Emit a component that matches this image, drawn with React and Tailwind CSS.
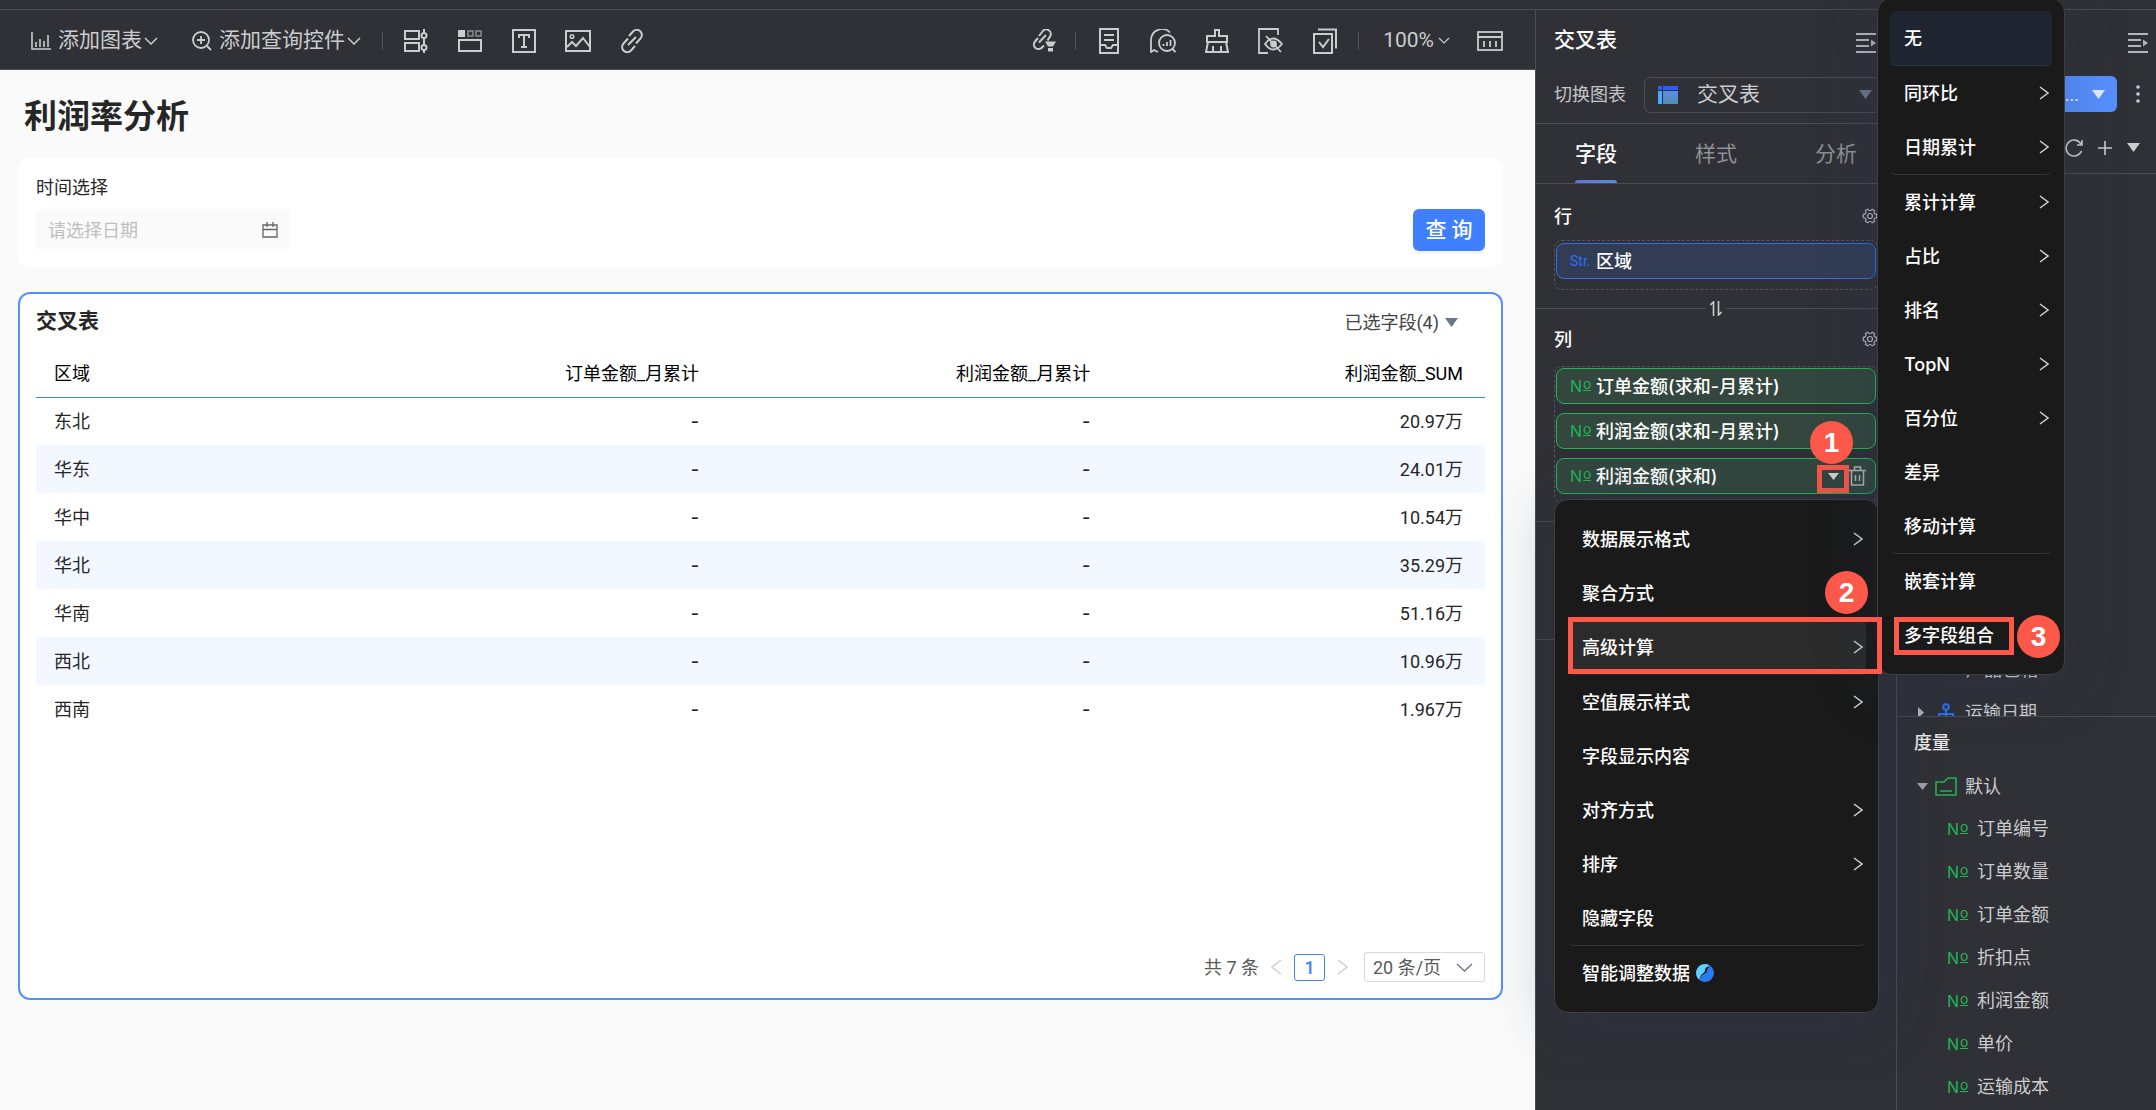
import React from "react";

const REGIONS = [
  ["东北", "20.97万"],
  ["华东", "24.01万"],
  ["华中", "10.54万"],
  ["华北", "35.29万"],
  ["华南", "51.16万"],
  ["西北", "10.96万"],
  ["西南", "1.967万"],
];

const MEASURES = ["订单编号", "订单数量", "订单金额", "折扣点", "利润金额", "单价", "运输成本"];

const FIELD_MENU = [
  { label: "数据展示格式", sub: true },
  { label: "聚合方式", mark: "2" },
  { label: "高级计算", sub: true, active: true },
  { label: "空值展示样式", sub: true },
  { label: "字段显示内容" },
  { label: "对齐方式", sub: true },
  { label: "排序", sub: true },
  { label: "隐藏字段", line: true },
  { label: "智能调整数据", ai: true },
];

const CALC_MENU = [
  { label: "无", selected: true },
  { label: "同环比", sub: true },
  { label: "日期累计", sub: true, line: true },
  { label: "累计计算", sub: true },
  { label: "占比", sub: true },
  { label: "排名", sub: true },
  { label: "TopN", sub: true },
  { label: "百分位", sub: true },
  { label: "差异" },
  { label: "移动计算", line: true },
  { label: "嵌套计算" },
  { label: "多字段组合", mark: "3" },
];

function Svg({ w = 26, h = 26, sw = 2, className = "", children }) {
  return (
    <svg
      width={w}
      height={h}
      viewBox={`0 0 ${w} ${h}`}
      fill="none"
      stroke="currentColor"
      strokeWidth={sw}
      className={`shrink-0 ${className}`}
      aria-hidden="true"
    >
      {children}
    </svg>
  );
}

const ChevronDown = ({ w = 14, h = 8, sw = 1.5, className }) => (
  <Svg w={w} h={h} sw={sw} className={className}>
    <path d={`M1 1 L${w / 2} ${h - 1} L${w - 1} 1`} />
  </Svg>
);
const ChevronRight = ({ className }) => (
  <Svg w={10} h={14} sw={1.5} className={className}>
    <path d="M1 1 L9 7 L1 13" />
  </Svg>
);
const Triangle = ({ className }) => (
  <Svg w={13} h={9} sw={0} className={className}>
    <path d="M0 0h13l-6.500 9z" fill="currentColor" />
  </Svg>
);
const Gear = () => (
  <Svg w={16} h={16} sw={1.2} className="text-[#b4b5b8]">
    <path d="M5.800 1.200 a2.500 2.500 0 0 0 4.400 0 l2.300 1.300 a2.500 2.500 0 0 0 2.200 3.900 v3.200 a2.500 2.500 0 0 0 -2.200 3.900 l-2.300 1.300 a2.500 2.500 0 0 0 -4.400 0 l-2.300 -1.300 a2.500 2.500 0 0 0 -2.200 -3.900 v-3.200 a2.500 2.500 0 0 0 2.200 -3.900z" />
    <circle cx="8" cy="8" r="2.500" />
  </Svg>
);
const Collapse = () => (
  <Svg w={20} h={20} sw={2} className="text-[#b4b5b8]">
    <path d="M0 1h20M0 7h13M0 13h13M0 19h20" />
    <path d="M15 6.500l5 3.500l-5 3.500z" fill="currentColor" stroke="none" />
  </Svg>
);
const Hierarchy = () => (
  <Svg w={20} h={20} sw={2} className="text-[#2e6ff2]">
    <circle cx="10" cy="4" r="2.800" />
    <path d="M10 7v7M3 15v-4h14v4" />
    <circle cx="3" cy="16.500" r="2" />
    <circle cx="10" cy="16.500" r="2" />
    <circle cx="17" cy="16.500" r="2" />
  </Svg>
);

// Numeric-field marker: a capital N with a raised, underlined o.
function NumberTag({ className }) {
  return (
    <span
      className={`flex items-center font-['Inter',sans-serif] text-[16px] leading-none font-normal text-[#22b455] ${className}`}
    >
      N<span className="mb-1 ml-px border-b border-current text-[14px] leading-[13px]">o</span>
    </span>
  );
}

function ToolButton({ label, children }) {
  return (
    <button type="button" aria-label={label} className="flex w-[26px] items-center justify-center">
      {children}
    </button>
  );
}

function Divider() {
  return <span className="h-[18px] w-px bg-[#55565b]" />;
}

function Toolbar() {
  return (
    <div className="flex h-[60px] items-center border-b border-[#4b4c51] bg-[#303136] pt-0.5 pr-8 pl-[31px] text-[21px] text-[#cbccce]">
      <button type="button" className="flex items-center">
        <Svg w={20} h={18} sw={1.6} className="mr-[7px]">
          <path d="M1 0v17h19M5 15v-5M9 15v-8M13 15v-6M17 15v-12" />
        </Svg>
        添加图表
        <ChevronDown className="ml-[2px]" />
      </button>
      <button type="button" className="ml-[34px] flex items-center">
        <Svg w={20} h={20} sw={1.8} className="mr-[7px]">
          <circle cx="9" cy="9" r="8" />
          <path d="M9 5v8M5 9h8M15 15l4 4" />
        </Svg>
        添加查询控件
        <ChevronDown className="ml-[2px]" />
      </button>
      <div className="ml-[21px] flex items-center gap-5">
        <Divider />
        <div className="flex items-center gap-7">
          <ToolButton label="筛选">
            <Svg w={24} h={24} sw={2}>
              <rect x="1" y="2" width="14" height="8" />
              <rect x="1" y="14" width="14" height="8" />
              <path d="M20 0v4M20 9v7M20 21v3" />
              <circle cx="20" cy="6.500" r="2.500" />
              <circle cx="20" cy="18.500" r="2.500" />
            </Svg>
          </ToolButton>
          <ToolButton label="标签页">
            <Svg w={24} h={22} sw={2}>
              <rect x="0" y="0" width="7" height="7" fill="currentColor" stroke="none" />
              <g strokeWidth="1.500" opacity="0.6">
                <rect x="10" y="1" width="5" height="5" />
                <rect x="18" y="1" width="5" height="5" />
              </g>
              <rect x="1" y="10" width="22" height="11" />
            </Svg>
          </ToolButton>
          <ToolButton label="文本">
            <Svg w={24} h={24} sw={2}>
              <rect x="1" y="1" width="22" height="22" />
              <path d="M7 9V6h10v3M12 6v12M9 18h6" />
            </Svg>
          </ToolButton>
          <ToolButton label="图片">
            <Svg w={26} h={22} sw={2}>
              <rect x="1" y="1" width="24" height="20" />
              <circle cx="7" cy="6.500" r="1.800" strokeWidth="1.500" />
              <path d="M2 17l5-5l4 4l7-8l7 9" />
            </Svg>
          </ToolButton>
          <ToolButton label="链接">
            <Svg w={24} h={24} sw={2}>
              <path d="M9 7l4-4.500a5 5 0 0 1 7.500 7l-4.500 5M15 17l-4 4.500a5 5 0 0 1-7.500-7l4.500-5M8 16l8-8" />
            </Svg>
          </ToolButton>
        </div>
      </div>
      <div className="ml-auto flex items-center">
        <ToolButton label="数据联动">
          <Svg w={24} h={24} sw={2}>
            <path d="M7 7l3.500-4.500a4.500 4.500 0 0 1 7.500 5l-2.500 4M12 16.500l-2 2a4.500 4.500 0 0 1-7-6l3-3.500M7 13.500l7-7.500" />
            <path d="M13 12.500h11l-3 5h-5zM16 19h5v3.500h-5z" fill="currentColor" stroke="none" />
          </Svg>
        </ToolButton>
        <span className="ml-[18px] flex">
          <Divider />
        </span>
        <div className="ml-5 flex items-center gap-7">
          <ToolButton label="存档">
            <Svg w={20} h={26} sw={2}>
              <rect x="1" y="1" width="18" height="24" />
              <path d="M5 7h10M5 12h10M1 17h5l2 3h4l2-3h5" />
            </Svg>
          </ToolButton>
          <ToolButton label="分析">
            <Svg w={26} h={24} sw={1.8}>
              <path d="M20 3.500A11 11 0 0 0 1 11v12l3-2l4 2" />
              <circle cx="17" cy="14" r="8" />
              <path d="M22.500 20l3 3M13.500 17v-2M17 17v-4M20.500 17v-6" />
            </Svg>
          </ToolButton>
          <ToolButton label="清理">
            <Svg w={24} h={24} sw={2}>
              <path d="M10 7V1h4v6h8v6H2V7zM3 13l-2 10h22l-2-10M8 23v-6M16 23v-6" />
            </Svg>
          </ToolButton>
          <ToolButton label="隐藏">
            <Svg w={26} h={26} sw={1.8}>
              <path d="M20 7V1H1v24h9" />
              <path d="M7 16q8-11 17 0q-9 11-17 0zM8 8l15 16" />
              <circle cx="15.500" cy="16" r="2.500" fill="currentColor" />
            </Svg>
          </ToolButton>
          <ToolButton label="选择">
            <Svg w={26} h={26} sw={2}>
              <rect x="2" y="6" width="18" height="19" />
              <path d="M6 1.500h18v19M7 14l4 5l6-8" />
            </Svg>
          </ToolButton>
        </div>
        <span className="ml-5 flex">
          <Divider />
        </span>
        <button type="button" className="ml-6 flex items-center">
          100%
          <ChevronDown w={12} h={7} sw={1.2} className="ml-1" />
        </button>
        <span className="ml-[27px] flex">
          <ToolButton label="布局">
            <Svg w={26} h={20} sw={1.8}>
              <rect x="1" y="1" width="24" height="18" />
              <path d="M1 6h24M7 10v6M13 10v6M19 10v6" />
            </Svg>
          </ToolButton>
        </span>
      </div>
    </div>
  );
}

function Canvas() {
  return (
    <main className="flex flex-1 flex-col bg-[#fafafa] pt-[25px] pr-8 pl-[18px] pb-[110px] text-[18px] text-[#262626]">
      <h1 className="pl-1.5 text-[33px] leading-[44px] font-bold">利润率分析</h1>

      <form className="mt-[19px] flex items-end justify-between rounded-xl bg-white pt-[17px] pr-[18px] pb-[17px] pl-[18px]">
        <div className="flex flex-col">
          <label htmlFor="date" className="mb-2 leading-[26px]">
            时间选择
          </label>
          <div className="flex h-[42px] w-[254px] items-center rounded-md bg-[#fafafa] px-3">
            <input
              id="date"
              type="text"
              placeholder="请选择日期"
              className="min-w-0 flex-1 bg-transparent outline-none placeholder:text-[#bfbfbf]"
            />
            <Svg w={16} h={16} sw={1.3} className="text-[#666]">
              <path d="M1 3h14v12H1zM1 7.500h14M5 0v5M11 0v5" />
            </Svg>
          </div>
        </div>
        <button
          type="button"
          className="h-[42px] w-[72px] rounded-md bg-[#407fff] pt-0.5 text-[21px] font-medium text-white shadow-[0_3px_0_rgba(0,0,0,0.04)]"
        >
          查 询
        </button>
      </form>

      <section className="mt-6 flex flex-1 flex-col rounded-xl border-2 border-[#5490fa] bg-white px-4">
        <div className="flex h-[56px] items-center justify-between pr-[27px]">
          <h2 className="text-[21px] font-bold">交叉表</h2>
          <button type="button" className="flex items-center text-[#444]">
            已选字段(4)
            <Triangle className="ml-1.5 text-[#6b7488]" />
          </button>
        </div>
        <table className="w-full table-fixed border-collapse text-right">
          <colgroup>
            <col className="w-[20%]" />
            <col className="w-[27%]" />
            <col className="w-[27%]" />
            <col className="w-[26%]" />
          </colgroup>
          <thead className="text-black">
            <tr className="h-[47px] border-b border-[#407fff]">
              <th scope="col" className="pl-[18px] text-left font-normal">
                区域
              </th>
              <th scope="col" className="pr-[18px] font-normal">
                订单金额_月累计
              </th>
              <th scope="col" className="pr-[18px] font-normal">
                利润金额_月累计
              </th>
              <th scope="col" className="pr-[22px] font-normal">
                利润金额_SUM
              </th>
            </tr>
          </thead>
          <tbody>
            {REGIONS.map(([name, value]) => (
              <tr key={name} className="h-[48px] even:bg-[#f3f7ff]">
                <td className="pl-[18px] text-left">{name}</td>
                <td className="pr-[18px] font-['Inter',sans-serif] font-medium">-</td>
                <td className="pr-[18px] font-['Inter',sans-serif] font-medium">-</td>
                <td className="pr-[22px]">{value}</td>
              </tr>
            ))}
          </tbody>
        </table>
        <nav className="mt-auto mb-4 flex items-center justify-end text-[#595959]">
          共 7 条
          <button type="button" aria-label="上一页" className="ml-3 text-[#d0d0d0]">
            <Svg w={11} h={16} sw={1.5}>
              <path d="M10 1L1 8l9 7" />
            </Svg>
          </button>
          <button
            type="button"
            className="mr-3 ml-3 h-[27px] w-[31px] rounded-[3px] border border-[#407fff] leading-[25px] font-medium text-[#407fff]"
          >
            1
          </button>
          <button type="button" aria-label="下一页" className="text-[#d0d0d0]">
            <Svg w={11} h={16} sw={1.5}>
              <path d="M1 1l9 7l-9 7" />
            </Svg>
          </button>
          <div className="relative ml-4 flex w-[121px] items-center">
            <select
              aria-label="每页条数"
              className="h-[30px] w-full appearance-none rounded-[3px] border border-[#d9d9d9] bg-white pl-2"
            >
              <option>20 条/页</option>
            </select>
            <ChevronDown w={17} h={9} sw={1.3} className="pointer-events-none absolute right-3 text-[#6b7488]" />
          </div>
        </nav>
      </section>
    </main>
  );
}

function Mark({ n, className }) {
  return (
    <span
      className={`absolute z-30 flex size-[43px] items-center justify-center rounded-full bg-[#fd584a] font-['Liberation_Sans',sans-serif] text-[28px] leading-none font-bold text-white ${className}`}
    >
      {n}
    </span>
  );
}

function MenuItem({ item }) {
  const tone = item.active ? "bg-[#2b2b2b]" : item.selected ? "bg-[#1f2530]" : "";
  const edge = item.line
    ? "border-b border-[#333438]"
    : item.selected
      ? "border-b border-[#2c3340]"
      : item.active
        ? "border-b border-[#2b2b2b]"
        : "";
  return (
    <li className="relative">
      <button
        type="button"
        className={`box-content flex h-[54px] w-full items-center rounded-md font-medium text-white ${tone} ${edge}`}
      >
        <span className="ml-3.5">{item.label}</span>
        {item.ai && (
          <Svg w={18} h={18} sw={0} className="ml-1.5">
            <circle cx="9" cy="9" r="9" fill="#2b7bf0" />
            <path d="M9 0a9 9 0 0 0-6 15.500c1-5 6-4 7-8c1-3 2-4 4-5.500a9 9 0 0 0-5-2z" fill="#5fd0ff" />
            <path d="M4 15.500c0-5 6-5 7-8.500c0-2 1-3 3-4.500c-4 0-5 2-5 4.500c-1 3-5.500 3-5 8.500z" fill="#10182c" />
          </Svg>
        )}
        {item.sub && <ChevronRight className="mr-[3px] ml-auto text-[#d0d0d0]" />}
      </button>
      {item.mark === "2" && <Mark n="2" className="top-[5px] -right-[2px]" />}
      {item.active && (
        <span className="pointer-events-none absolute -top-[3px] -right-4 bottom-px left-0 z-30 border-[5px] border-[#fd584a]" />
      )}
      {item.mark === "3" && (
        <>
          <span className="pointer-events-none absolute top-[9px] bottom-[7px] left-1 z-30 w-[120px] border-[5px] border-[#fd584a]" />
          <Mark n="3" className="top-[7px] left-[127px]" />
        </>
      )}
    </li>
  );
}

function CalcMenu() {
  return (
    <ul className="absolute -top-[502px] left-[322px] z-20 w-[188px] rounded-[14px] border border-[#3e3f43] bg-[#1a1a1a] p-3 font-['Inter','Noto_Sans_CJK_SC',sans-serif] shadow-[0_8px_56px_8px_rgba(32,48,80,0.22)]">
      {CALC_MENU.map((item) => (
        <MenuItem key={item.label} item={item} />
      ))}
    </ul>
  );
}

function FieldMenu() {
  return (
    <div className="absolute top-[132px] -left-px z-10 w-[325px] rounded-[14px] border border-[#3e3f43] bg-[#1a1a1a] shadow-[0_8px_56px_8px_rgba(32,48,80,0.22)]">
      <ul className="py-3 pr-3 pl-[13px]">
        {FIELD_MENU.map((item) => (
          <MenuItem key={item.label} item={item} />
        ))}
      </ul>
      <CalcMenu />
    </div>
  );
}

function MeasureChip({ label, open }) {
  return (
    <div className="flex h-[36px] items-center rounded-lg border border-[#22b455] bg-[#33473e] font-['Inter','Noto_Sans_CJK_SC',sans-serif] font-medium text-white">
      <NumberTag className="w-[39px] pl-[13px]" />
      {label}
      {open && (
        <div className="mr-[9px] ml-auto flex items-center gap-1.5">
          <button
            type="button"
            aria-label="字段设置"
            className="relative flex h-7 w-5 items-center justify-center text-[#d5d6d8]"
          >
            <Svg w={11} h={7} sw={0}>
              <path d="M0 0h11l-5.500 7z" fill="currentColor" />
            </Svg>
            <span className="absolute top-[3px] -right-1.5 -bottom-[3px] -left-1.5 border-[5px] border-[#fd584a]" />
            <Mark n="1" className="-top-[41px] -left-[13px]" />
          </button>
          <button type="button" aria-label="删除" className="text-[#b4b5b8]">
            <Svg w={17} h={20} sw={1.5}>
              <path d="M0 4.500h17M5.500 4V1h6v3M2.500 5v14h12V5M6.500 9v6M10.500 9v6" />
            </Svg>
          </button>
        </div>
      )}
    </div>
  );
}

function ChartPanel() {
  return (
    <aside className="relative z-10 flex w-[361px] shrink-0 flex-col border-l border-[#4b4c51] bg-[#303136] text-[18px] text-white">
      <div className="flex h-[60px] items-center justify-between pt-px pr-5 pl-[18px]">
        <h2 className="text-[21px] font-medium">交叉表</h2>
        <button type="button" aria-label="收起" className="pt-1">
          <Collapse />
        </button>
      </div>
      <div className="flex h-[54px] items-center border-b border-[#4b4c51] pr-4 pb-1 pl-[18px]">
        <label htmlFor="chart" className="mr-[18px] text-[#c4c5c8]">
          切换图表
        </label>
        <div className="relative flex flex-1 items-center">
          <Svg w={20} h={18} sw={0} className="pointer-events-none absolute left-3.5">
            <defs>
              <linearGradient id="cross" x1="0" y1="0" x2="0" y2="1">
                <stop offset="0" stopColor="#5a8ef0" />
                <stop offset="1" stopColor="#4f8fa8" />
              </linearGradient>
            </defs>
            <path d="M0 0h4v4h-4zM5 0h15v4h-15z" fill="#2f5bff" />
            <path d="M0 5h4v13h-4z" fill="#4aa8ff" />
            <path d="M5 5h15v13h-15z" fill="url(#cross)" />
          </Svg>
          <select
            id="chart"
            className="h-[36px] w-full appearance-none rounded-md border border-[#4b4c51] bg-[#303136] pl-[52px] text-[21px] leading-none text-[#cbccce]"
          >
            <option>交叉表</option>
          </select>
          <Triangle className="pointer-events-none absolute right-2 text-[#6b7488]" />
        </div>
      </div>
      <div role="tablist" className="grid h-[60px] grid-cols-3 border-b border-[#4b4c51] text-[21px] text-[#8f9094]">
        <button
          type="button"
          role="tab"
          aria-selected="true"
          className="flex flex-col items-center justify-between font-medium text-white"
        >
          <span className="mt-[15px]">字段</span>
          <span className="h-[3px] w-[42px] rounded-t bg-gradient-to-r from-[#6b6bd9] to-[#4b93d9]" />
        </button>
        <button type="button" role="tab" className="pt-0.5">
          样式
        </button>
        <button type="button" role="tab" className="pt-0.5">
          分析
        </button>
      </div>

      <section className="px-[18px] pb-[18px]">
        <div className="flex h-[56px] items-center justify-between pt-2">
          <h3 className="font-medium">行</h3>
          <button type="button" aria-label="行设置">
            <Gear />
          </button>
        </div>
        <div className="h-[50px] rounded-lg border border-dashed border-[#55565b] p-px pt-0.5">
          <div className="flex h-[36px] items-center rounded-lg border border-[#2e6ff2] bg-[#323d55] font-medium">
            <span className="w-[39px] pl-[13px] text-[14px] font-normal text-[#2e6ff2]">Str.</span>
            区域
          </div>
        </div>
      </section>

      <section className="px-[18px] pb-[18px]">
        <div className="-mx-[18px] -mt-2 flex h-4 items-center gap-1">
          <span className="h-px flex-1 bg-[#4b4c51]" />
          <Svg w={12} h={15} sw={1.6} className="text-[#cbccce]">
            <path d="M3.500 15V1l-3 3M8.500 0v14l3-3" />
          </Svg>
          <span className="h-px flex-1 bg-[#4b4c51]" />
        </div>
        <div className="flex h-[50px] items-center justify-between pb-1">
          <h3 className="font-medium">列</h3>
          <button type="button" aria-label="列设置">
            <Gear />
          </button>
        </div>
        <div className="relative flex flex-col gap-[9px] rounded-lg border border-dashed border-[#55565b] p-px pb-2">
          <MeasureChip label="订单金额(求和-月累计)" />
          <MeasureChip label="利润金额(求和-月累计)" />
          <MeasureChip label="利润金额(求和)" open />
          <FieldMenu />
        </div>
      </section>
      <div className="h-[119px] border-y border-[#4b4c51]" />
    </aside>
  );
}

function DataPanel() {
  return (
    <aside className="flex w-[260px] shrink-0 flex-col border-l border-[#4b4c51] bg-[#303136] text-[18px] text-[#cbccce]">
      <div className="flex h-[60px] items-center justify-end pt-[5px] pr-2">
        <button type="button" aria-label="收起">
          <Collapse />
        </button>
      </div>
      <div className="flex h-[52px] items-center justify-end pb-1">
        <button
          type="button"
          aria-label="数据集"
          className="flex h-[36px] w-[190px] items-center justify-end rounded-md bg-[#5790ff] pr-3 text-white"
        >
          ...
          <Triangle className="ml-[13px] text-[#e6eeff]" />
        </button>
        <button type="button" aria-label="更多" className="mr-[15px] ml-[18px]">
          <Svg w={6} h={20} sw={0}>
            <g fill="#cbccce">
              <circle cx="3" cy="3" r="1.800" />
              <circle cx="3" cy="10" r="1.800" />
              <circle cx="3" cy="17" r="1.800" />
            </g>
          </Svg>
        </button>
      </div>
      <div className="flex h-[52px] items-center justify-end gap-[15px] border-b border-[#4b4c51] pr-4">
        <button type="button" aria-label="刷新">
          <Svg w={18} h={18} sw={1.6}>
            <path d="M16.500 12A8 8 0 1 1 16 5M17 1v5h-5" />
          </Svg>
        </button>
        <button type="button" aria-label="新增">
          <Svg w={14} h={14} sw={1.6}>
            <path d="M7 0v14M0 7h14" />
          </Svg>
        </button>
        <button type="button" aria-label="展开">
          <Triangle />
        </button>
      </div>
      <ul className="h-[543px] overflow-hidden border-b border-[#4b4c51] pt-[474px] pl-[21px]">
        <li className="flex h-[43px] items-center">
          <span className="ml-[20px] w-[28px] text-[14px] text-[#2e6ff2]">Str.</span>
          产品包箱
        </li>
        <li className="flex h-[43px] items-center">
          <Svg w={6} h={11} sw={0} className="mr-3">
            <path d="M0 0v11l6-5.500z" fill="#b4b5b8" />
          </Svg>
          <Hierarchy />
          <span className="ml-[9px]">运输日期</span>
        </li>
      </ul>
      <h3 className="flex h-[51px] items-center pl-[17px] font-medium text-[#e8e8e8]">度量</h3>
      <div className="flex h-[36px] items-center pl-5">
        <Svg w={11} h={7} sw={0} className="mr-[7px]">
          <path d="M0 0h11l-5.500 7z" fill="#a0a1a5" />
        </Svg>
        <Svg w={22} h={19} sw={1.6} className="text-[#22b455]">
          <path d="M1 5h8l4-4h8v17H1zM5 14h12" strokeLinejoin="round" />
        </Svg>
        <span className="ml-[8px]">默认</span>
      </div>
      <ul className="pt-[3px]">
        {MEASURES.map((name) => (
          <li key={name} className="flex h-[43px] items-center pl-[50px]">
            <NumberTag className="w-[30px]" />
            {name}
          </li>
        ))}
      </ul>
    </aside>
  );
}

export default function App() {
  return (
    <div className="flex h-screen flex-col overflow-hidden bg-[#303136] font-['Roboto','Noto_Sans_CJK_SC',sans-serif]">
      <div className="h-[10px] shrink-0 border-b border-[#4b4c51]" />
      <div className="flex min-h-0 flex-1">
        <div className="flex min-w-0 flex-1 flex-col">
          <Toolbar />
          <Canvas />
        </div>
        <ChartPanel />
        <DataPanel />
      </div>
    </div>
  );
}
